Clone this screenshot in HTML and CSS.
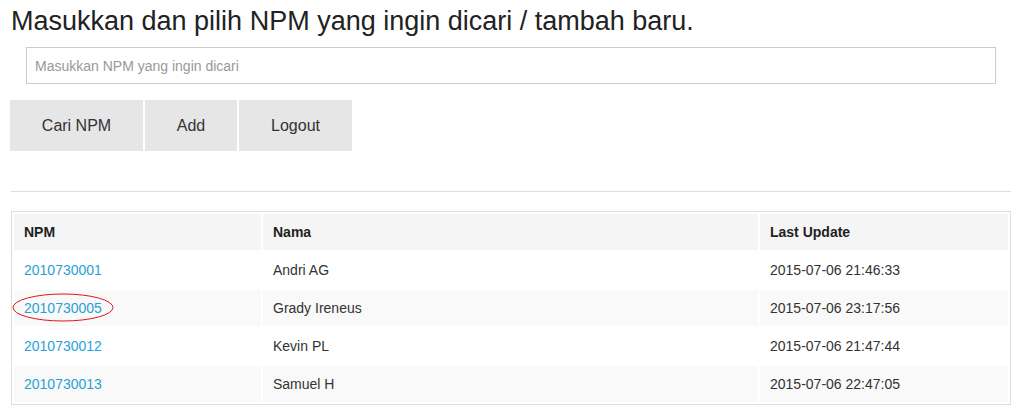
FILE: index.html
```html
<!DOCTYPE html>
<html>
<head>
<meta charset="utf-8">
<link rel="stylesheet" href="styles.css">
</head>
<body>
<div class="page">
  <h1 class="title">Masukkan dan pilih NPM yang ingin dicari / tambah baru.</h1>
  <div class="search">
    <input class="search-input" type="text" placeholder="Masukkan NPM yang ingin dicari">
  </div>
  <div class="actions">
    <button class="btn btn-cari">Cari NPM</button>
    <button class="btn btn-add">Add</button>
    <button class="btn btn-logout">Logout</button>
  </div>
  <hr class="divider">
  <table class="data">
    <thead>
      <tr><th class="c1">NPM</th><th class="c2">Nama</th><th class="c3">Last Update</th></tr>
    </thead>
    <tbody>
      <tr><td><a href="#">2010730001</a></td><td>Andri AG</td><td>2015-07-06 21:46:33</td></tr>
      <tr class="striped"><td><a href="#">2010730005</a></td><td>Grady Ireneus</td><td>2015-07-06 23:17:56</td></tr>
      <tr><td><a href="#">2010730012</a></td><td>Kevin PL</td><td>2015-07-06 21:47:44</td></tr>
      <tr class="striped"><td><a href="#">2010730013</a></td><td>Samuel H</td><td>2015-07-06 22:47:05</td></tr>
    </tbody>
  </table>
  <svg class="mark" width="102" height="30" viewBox="0 0 102 30">
    <ellipse cx="51" cy="14.5" rx="50" ry="13.5" fill="none" stroke="#e0161c" stroke-width="1"/>
  </svg>
</div>
</body>
</html>
```

FILE: styles.css
```css
html, body {
  margin: 0;
  padding: 0;
  background: #fff;
}
.page {
  position: relative;
  font-family: "Liberation Sans", Arial, sans-serif;
  color: #333;
  width: 1021px;
}
.title {
  margin: 0;
  padding: 6px 0 0 11px;
  font-size: 27px;
  line-height: 30px;
  font-weight: normal;
  color: #222;
}
.search {
  padding: 11px 0 0 26px;
}
.search-input {
  box-sizing: border-box;
  display: block;
  width: 970px;
  height: 37px;
  margin: 0;
  border: 1px solid #ccc;
  padding: 0 8px;
  font-family: "Liberation Sans", Arial, sans-serif;
  font-size: 14px;
  color: #555;
  outline: none;
}
.search-input::placeholder {
  color: #999;
}
.actions {
  display: flex;
  gap: 2px;
  padding: 16px 0 0 10px;
}
.btn {
  height: 51px;
  border: none;
  margin: 0;
  padding: 0;
  background: #e6e6e6;
  font-family: "Liberation Sans", Arial, sans-serif;
  font-size: 16px;
  color: #333;
}
.btn-cari { width: 133px; }
.btn-add { width: 92px; }
.btn-logout { width: 113px; }
.divider {
  margin: 40px 0 0 11px;
  width: 1000px;
  border: none;
  border-top: 1px solid #ddd;
  height: 0;
}
.data {
  margin: 19px 0 0 11px;
  width: 1000px;
  border: 1px solid #ddd;
  border-collapse: separate;
  border-spacing: 2px;
  font-size: 14px;
  table-layout: fixed;
}
.data th, .data td {
  text-align: left;
  padding: 8px 10px;
  line-height: 20px;
  height: 20px;
  vertical-align: middle;
}
.data th {
  background: #f5f5f5;
  font-weight: bold;
  color: #222;
}
.c1 { width: 227px; }
.c2 { width: 475px; }
.c3 { width: 228px; }
.data tr.striped td {
  background: #f9f9f9;
}
.data a {
  color: #2a9fd6;
  text-decoration: none;
}
.mark {
  position: absolute;
  left: 12px;
  top: 293px;
}
```
